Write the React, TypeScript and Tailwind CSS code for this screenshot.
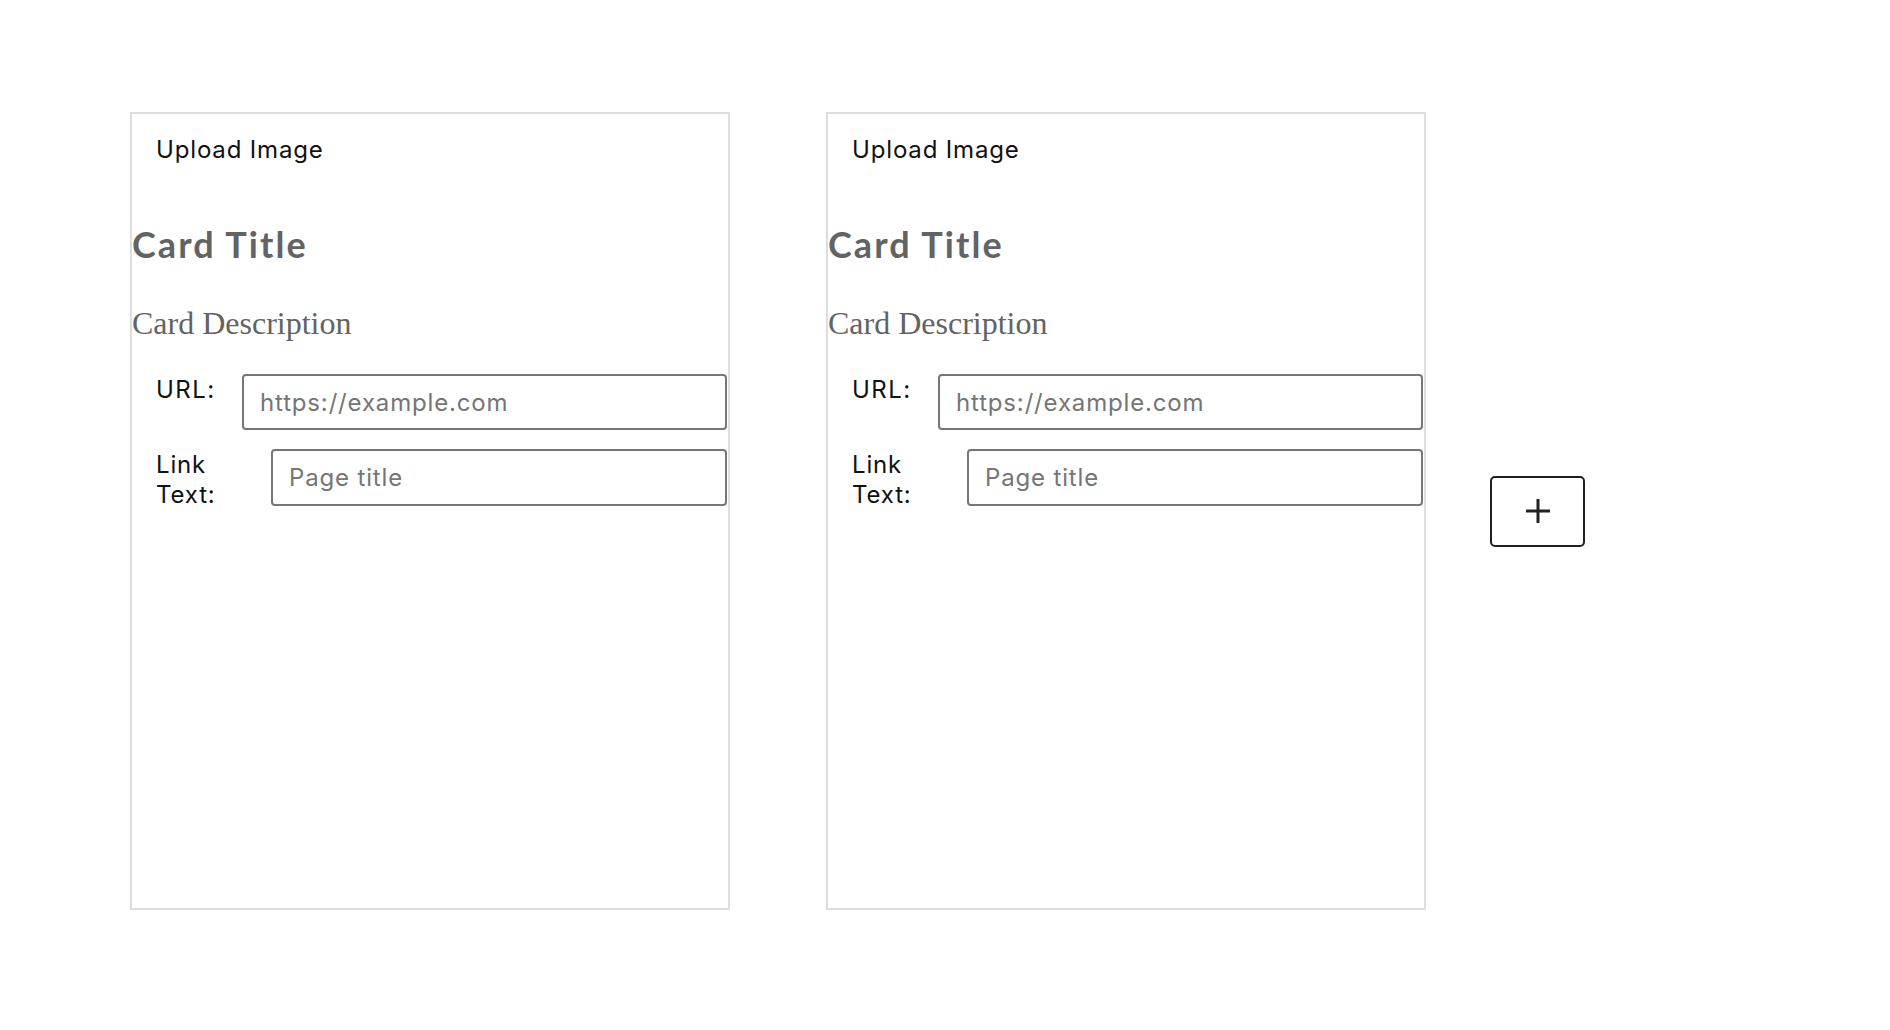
function Card() {
  return (
    <div className="w-[600px] h-[798px] shrink-0 border-2 border-[#dddddd] bg-white">
      <div className="pt-[22px] pl-[24px] text-[24px] leading-[28px] tracking-[0.035em] text-[#111111] font-['Inter',sans-serif]">
        Upload Image
      </div>
      <h2 className="mt-[60px] text-[36px] leading-[40px] font-bold tracking-[0.057em] text-[#636363] font-['Lato',sans-serif]">
        Card Title
      </h2>
      <p className="mt-[40px] text-[32px] leading-[38px] text-[#636363] font-['Liberation_Serif',serif]">
        Card Description
      </p>
      <div className="mt-[32px] pl-[24px] flex flex-col gap-[19px] font-['Inter',sans-serif] text-[24px] tracking-[0.035em]">
        <div className="flex items-start">
          <label className="w-[62px] mr-[24px] pt-[2px] leading-[28px] tracking-[0.06em] text-[#111111]">URL:</label>
          <input
            type="text"
            placeholder="https://example.com"
            className="flex-1 min-w-0 mr-[1px] h-[56px] border-2 border-[#767676] rounded-[4px] px-[16px] text-[24px] tracking-[0.035em] outline-none placeholder:text-[#757575]"
          />
        </div>
        <div className="flex items-start">
          <label className="w-[62px] mr-[53px] pt-[1px] leading-[30px] text-[#111111]">Link Text:</label>
          <input
            type="text"
            placeholder="Page title"
            className="flex-1 min-w-0 mr-[1px] h-[57px] border-2 border-[#767676] rounded-[4px] px-[16px] text-[24px] tracking-[0.035em] outline-none placeholder:text-[#757575]"
          />
        </div>
      </div>
    </div>
  );
}

export default function App() {
  return (
    <div className="min-h-screen bg-white flex items-center pt-[112px] pb-[120px] pl-[130px]">
      <Card />
      <div className="ml-[96px]">
        <Card />
      </div>
      <button className="ml-[64px] w-[95px] h-[71px] shrink-0 border-2 border-[#1f1f1f] rounded-[5px] bg-white flex items-center justify-center">
        <svg width="24" height="24" viewBox="0 0 24 24" stroke="#222222" strokeWidth="3" fill="none">
          <path d="M12 0v24M0 12h24" />
        </svg>
      </button>
    </div>
  );
}
